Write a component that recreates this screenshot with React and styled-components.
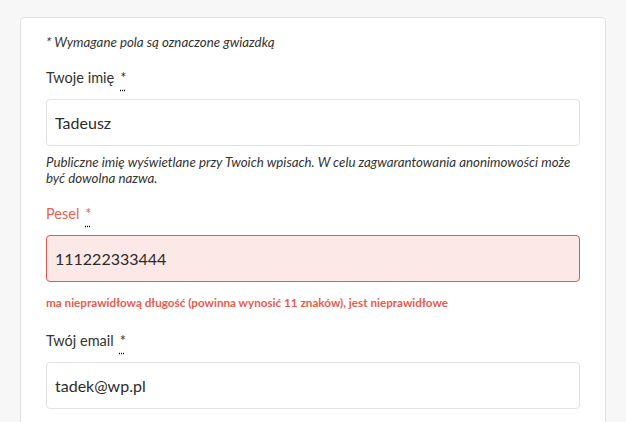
import React from "react";
import styled, { createGlobalStyle } from "styled-components";

const Global = createGlobalStyle`
  html, body {
    margin: 0;
    padding: 0;
    background: #f7f7f7;
    font-family: Lato, "Noto Sans", sans-serif;
    color: #333;
  }
`;

const Page = styled.div`
  padding: 17px 20px 0 20px;
  height: 405px;
  overflow: hidden;
`;

const Card = styled.div`
  background: #fff;
  border: 1px solid #e2e2e2;
  border-radius: 4px;
  padding: 16px 25px 40px 25px;
  min-height: 420px;
`;

const Note = styled.p`
  margin: 0 0 18px 0;
  font-size: 13.3px;
  font-style: italic;
  line-height: 16px;
  color: #333;
`;

const Field = styled.div`
  margin-bottom: 18px;
`;

const Label = styled.label`
  display: block;
  font-size: 14.5px;
  line-height: 20px;
  margin-bottom: 11px;
  color: ${p => (p.$error ? "#ee5e4f" : "#333")};
`;

const Req = styled.abbr`
  margin-left: 6px;
  text-decoration-line: underline;
  text-decoration-style: dotted;
  text-decoration-color: #000;
  text-underline-offset: 7px;
`;

const Input = styled.input`
  display: block;
  box-sizing: border-box;
  width: 100%;
  height: 47px;
  padding: 0 8px;
  font-family: inherit;
  font-size: 16px;
  color: #2b2b2b;
  border: 1px solid ${p => (p.$error ? "#e9574a" : "#e2e2e2")};
  background: ${p => (p.$error ? "#fce8e7" : "#fff")};
  border-radius: 4px;
  outline: none;
`;

const Hint = styled.p`
  margin: 8px 0 0 0;
  font-size: 13.3px;
  font-style: italic;
  line-height: 16px;
  color: #333;
`;

const ErrorText = styled.p`
  margin: 12px 0 0 0;
  padding-bottom: 3px;
  font-size: 11.7px;
  font-weight: 700;
  line-height: 16px;
  color: #ea5b4c;
`;

export default function App() {
  return (
    <>
      <Global />
      <Page>
        <Card>
          <Note>* Wymagane pola są oznaczone gwiazdką</Note>
          <Field>
            <Label>
              Twoje imię<Req title="wymagane">*</Req>
            </Label>
            <Input defaultValue="Tadeusz" />
            <Hint>
              Publiczne imię wyświetlane przy Twoich wpisach. W celu
              zagwarantowania anonimowości może być dowolna nazwa.
            </Hint>
          </Field>
          <Field>
            <Label $error>
              Pesel<Req title="wymagane">*</Req>
            </Label>
            <Input $error defaultValue="111222333444" />
            <ErrorText>
              ma nieprawidłową długość (powinna wynosić 11 znaków), jest
              nieprawidłowe
            </ErrorText>
          </Field>
          <Field>
            <Label>
              Twój email<Req title="wymagane">*</Req>
            </Label>
            <Input defaultValue="tadek@wp.pl" />
          </Field>
        </Card>
      </Page>
    </>
  );
}
